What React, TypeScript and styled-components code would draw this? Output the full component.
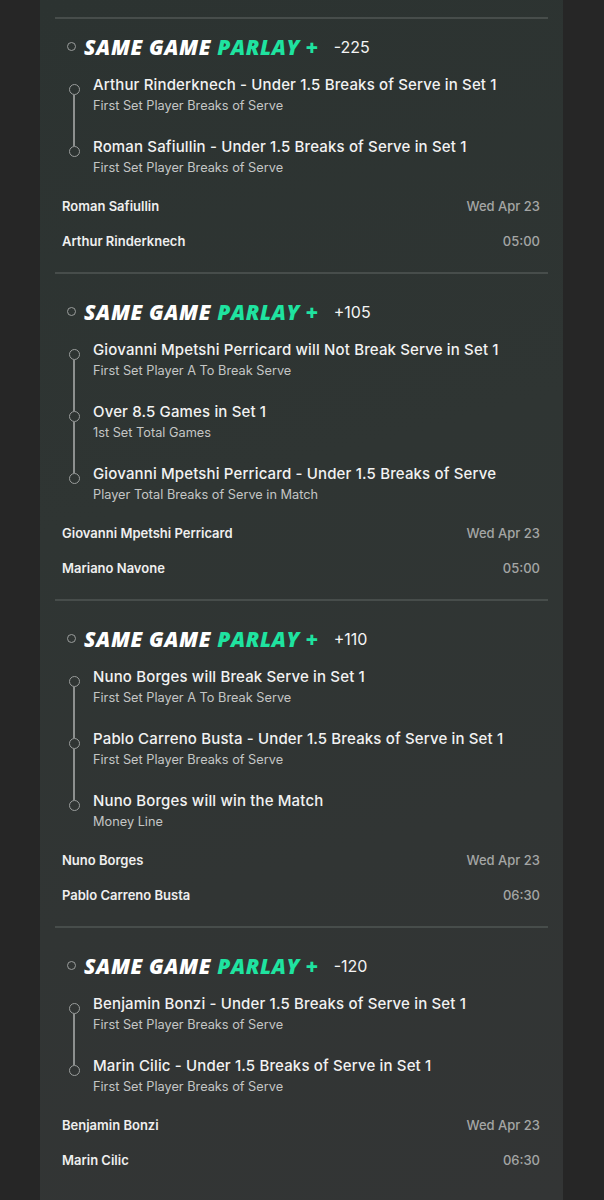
import React from 'react';
import styled, { createGlobalStyle } from 'styled-components';

const GlobalStyle = createGlobalStyle`
  html, body {
    margin: 0;
    padding: 0;
    background: #262626;
  }
  * {
    box-sizing: border-box;
  }
`;

type Leg = { title: string; market: string };
type Parlay = { odds: string; legs: Leg[]; home: string; away: string; date: string; time: string };

const parlays: Parlay[] = [
  {
    odds: '-225',
    legs: [
      { title: 'Arthur Rinderknech - Under 1.5 Breaks of Serve in Set 1', market: 'First Set Player Breaks of Serve' },
      { title: 'Roman Safiullin - Under 1.5 Breaks of Serve in Set 1', market: 'First Set Player Breaks of Serve' },
    ],
    home: 'Roman Safiullin',
    away: 'Arthur Rinderknech',
    date: 'Wed Apr 23',
    time: '05:00',
  },
  {
    odds: '+105',
    legs: [
      { title: 'Giovanni Mpetshi Perricard will Not Break Serve in Set 1', market: 'First Set Player A To Break Serve' },
      { title: 'Over 8.5 Games in Set 1', market: '1st Set Total Games' },
      { title: 'Giovanni Mpetshi Perricard - Under 1.5 Breaks of Serve', market: 'Player Total Breaks of Serve in Match' },
    ],
    home: 'Giovanni Mpetshi Perricard',
    away: 'Mariano Navone',
    date: 'Wed Apr 23',
    time: '05:00',
  },
  {
    odds: '+110',
    legs: [
      { title: 'Nuno Borges will Break Serve in Set 1', market: 'First Set Player A To Break Serve' },
      { title: 'Pablo Carreno Busta - Under 1.5 Breaks of Serve in Set 1', market: 'First Set Player Breaks of Serve' },
      { title: 'Nuno Borges will win the Match', market: 'Money Line' },
    ],
    home: 'Nuno Borges',
    away: 'Pablo Carreno Busta',
    date: 'Wed Apr 23',
    time: '06:30',
  },
  {
    odds: '-120',
    legs: [
      { title: 'Benjamin Bonzi - Under 1.5 Breaks of Serve in Set 1', market: 'First Set Player Breaks of Serve' },
      { title: 'Marin Cilic - Under 1.5 Breaks of Serve in Set 1', market: 'First Set Player Breaks of Serve' },
    ],
    home: 'Benjamin Bonzi',
    away: 'Marin Cilic',
    date: 'Wed Apr 23',
    time: '06:30',
  },
];

const Page = styled.div`
  width: 604px;
  min-height: 1200px;
  padding-left: 40px;
  background: #262626;
  overflow: hidden;
`;

const Panel = styled.div`
  width: 523px;
  min-height: 1200px;
  padding: 17px 15px 0;
  background: linear-gradient(165deg, #2c3331 0%, #2f3533 40%, #333535 100%);
  font-family: Inter, "Noto Sans", sans-serif;
  color: #f1f1f1;
`;

const Divider = styled.div`
  height: 1.5px;
  background: #474d4b;
`;

const Card = styled.div<{ $first?: boolean }>`
  padding-top: ${(p) => (p.$first ? 15 : 25)}px;
  padding-bottom: 21.5px;
`;

const Header = styled.div`
  display: flex;
  align-items: center;
  height: 26px;
  padding-left: 12px;
`;

const Dot = styled.span<{ $size: number }>`
  display: block;
  flex: none;
  width: ${(p) => p.$size}px;
  height: ${(p) => p.$size}px;
  border: 1.5px solid #9a9d9c;
  border-radius: 50%;
`;

const Brand = styled.span`
  margin-left: 8px;
  font-family: "Open Sans", Lato, sans-serif;
  font-style: italic;
  font-weight: 800;
  font-size: 21px;
  letter-spacing: 0.6px;
  color: #ffffff;
  line-height: 26px;
  white-space: nowrap;
`;

const Green = styled.span`
  color: #1fe3a0;
`;

const Odds = styled.span`
  margin-left: 15px;
  font-size: 16px;
  font-weight: 400;
  color: #f4f4f4;
  line-height: 26px;
`;

const Legs = styled.div`
  margin-top: 15px;
`;

const LegRow = styled.div`
  display: grid;
  grid-template-columns: 38px 1fr;
`;

const Rail = styled.div`
  display: flex;
  flex-direction: column;
  align-items: center;
  padding-top: 9px;
`;

const RailLine = styled.div`
  flex: 1;
  width: 1.5px;
  background: #8d908f;
  margin-bottom: -9px;
`;

const LegText = styled.div<{ $last: boolean }>`
  display: flex;
  flex-direction: column;
  gap: 2px;
  padding-bottom: ${(p) => (p.$last ? 0 : 22)}px;
`;

const LegTitle = styled.div`
  font-size: 15px;
  font-weight: 500;
  letter-spacing: 0.15px;
  line-height: 20px;
  color: #f2f2f2;
  white-space: nowrap;
`;

const LegMarket = styled.div`
  font-size: 12.75px;
  font-weight: 400;
  line-height: 18px;
  color: #c4c6c5;
`;

const Teams = styled.div`
  display: flex;
  flex-direction: column;
  gap: 15px;
  margin-top: 19px;
  padding: 0 8px 0 7px;
`;

const TeamRow = styled.div`
  display: flex;
  justify-content: space-between;
  align-items: center;
  line-height: 20px;
  font-size: 13px;
`;

const TeamName = styled.span`
  font-weight: 600;
  color: #efefef;
`;

const Meta = styled.span`
  font-weight: 500;
  color: #a4a6a5;
`;

const ParlayCard = ({ parlay, first }: { parlay: Parlay; first: boolean }) => (
  <Card $first={first}>
    <Header>
      <Dot $size={9} />
      <Brand>
        SAME GAME <Green>PARLAY +</Green>
      </Brand>
      <Odds>{parlay.odds}</Odds>
    </Header>
    <Legs>
      {parlay.legs.map((leg, i) => {
        const last = i === parlay.legs.length - 1;
        return (
          <LegRow key={i}>
            <Rail>
              <Dot $size={11} />
              {!last && <RailLine />}
            </Rail>
            <LegText $last={last}>
              <LegTitle>{leg.title}</LegTitle>
              <LegMarket>{leg.market}</LegMarket>
            </LegText>
          </LegRow>
        );
      })}
    </Legs>
    <Teams>
      <TeamRow>
        <TeamName>{parlay.home}</TeamName>
        <Meta>{parlay.date}</Meta>
      </TeamRow>
      <TeamRow>
        <TeamName>{parlay.away}</TeamName>
        <Meta>{parlay.time}</Meta>
      </TeamRow>
    </Teams>
  </Card>
);

const App = () => (
  <>
    <GlobalStyle />
    <Page>
      <Panel>
        {parlays.map((p, i) => (
          <React.Fragment key={i}>
            <Divider />
            <ParlayCard parlay={p} first={i === 0} />
          </React.Fragment>
        ))}
      </Panel>
    </Page>
  </>
);

export default App;
